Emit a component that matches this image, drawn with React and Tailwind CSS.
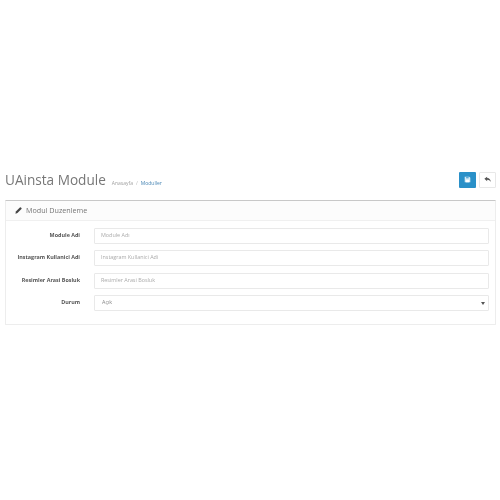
import React from "react";

function Row({ label, children }) {
  return (
    <div className="flex items-center h-[16px]">
      <div className="w-[74px] text-right text-[5.4px] font-bold text-[#555] shrink-0 leading-none whitespace-nowrap">{label}</div>
      <div className="ml-[14px] w-[395px]">{children}</div>
    </div>
  );
}

function Field({ placeholder }) {
  return (
    <div className="h-[16px] border border-[#e9e9e9] rounded-[1px] bg-white flex items-center pl-[6px] text-[5.4px] text-[#aaa] leading-none">
      {placeholder}
    </div>
  );
}

export default function App() {
  return (
    <div className="w-[500px] h-[500px] bg-white font-['Open_Sans',sans-serif] overflow-hidden pt-[170px] pl-[5px] pr-[4px] blur-[0.3px]">
      <div className="flex items-center h-[19px] justify-between">
        <div className="flex items-end">
          <span className="text-[13.6px] leading-[19px] text-[#777]">UAinsta Module</span>
          <span className="ml-[6px] mb-[2px] text-[5px] leading-[8px] text-[#a0a0a0]">Anasayfa</span>
          <span className="ml-[3px] mb-[2px] text-[5px] leading-[8px] text-[#bbb]">/</span>
          <span className="ml-[3px] mb-[2px] text-[5px] leading-[8px] text-[#4a87b5]">Moduller</span>
        </div>
        <div className="flex gap-[3px]">
          <div className="w-[17px] h-[16px] rounded-[1px] bg-[#2a90c8] flex items-center justify-center">
            <svg width="7" height="7" viewBox="0 0 10 10"><path d="M1 1h6.5L9 2.5V9H1z" fill="#d5eaf6" /><rect x="3" y="1" width="3.6" height="2.4" fill="#5aa9d6" /><rect x="2.6" y="5.6" width="4.8" height="3.4" fill="#fff" /></svg>
          </div>
          <div className="w-[17px] h-[16px] rounded-[1px] bg-white border border-[#e8e8e8] flex items-center justify-center">
            <svg width="7" height="7" viewBox="0 0 10 10"><path d="M0.5 4L4.5 1v2C8 3 9.5 5.5 9.5 8.5 8.5 6.5 7 5.5 4.5 5.5v2z" fill="#555" /></svg>
          </div>
        </div>
      </div>
      <div className="mt-[11px] w-[491px] border border-[#ededed] border-t-[#c8c8c8] rounded-[1px] h-[125px]">
        <div className="h-[20px] bg-[#fcfcfc] border-b border-[#f0f0f0] flex items-center pl-[9px]">
          <svg width="7" height="7" viewBox="0 0 10 10"><path d="M0.5 9.5l.8-3L7 .8a1 1 0 0 1 1.4 0l.8.8a1 1 0 0 1 0 1.4L3.5 8.7z" fill="#444" /></svg>
          <span className="ml-[4px] text-[7.2px] leading-none text-[#777]">Modul Duzenleme</span>
        </div>
        <div className="pt-[6.5px] flex flex-col gap-[6.5px]">
          <Row label="Module Adi"><Field placeholder="Module Adı" /></Row>
          <Row label="Instagram Kullanici Adi"><Field placeholder="Instagram Kullanici Adi" /></Row>
          <Row label="Resimler Arasi Bosluk"><Field placeholder="Resimler Arasi Bosluk" /></Row>
          <Row label="Durum">
            <div className="relative h-[16px] border border-[#e9e9e9] rounded-[1px] bg-white flex items-center pl-[7px] text-[5.4px] text-[#888] leading-none">
              Açık
              <span className="absolute right-[3px] top-[6px] w-0 h-0 border-l-[2px] border-r-[2px] border-t-[3px] border-l-transparent border-r-transparent border-t-[#555]" />
            </div>
          </Row>
        </div>
      </div>
    </div>
  );
}
